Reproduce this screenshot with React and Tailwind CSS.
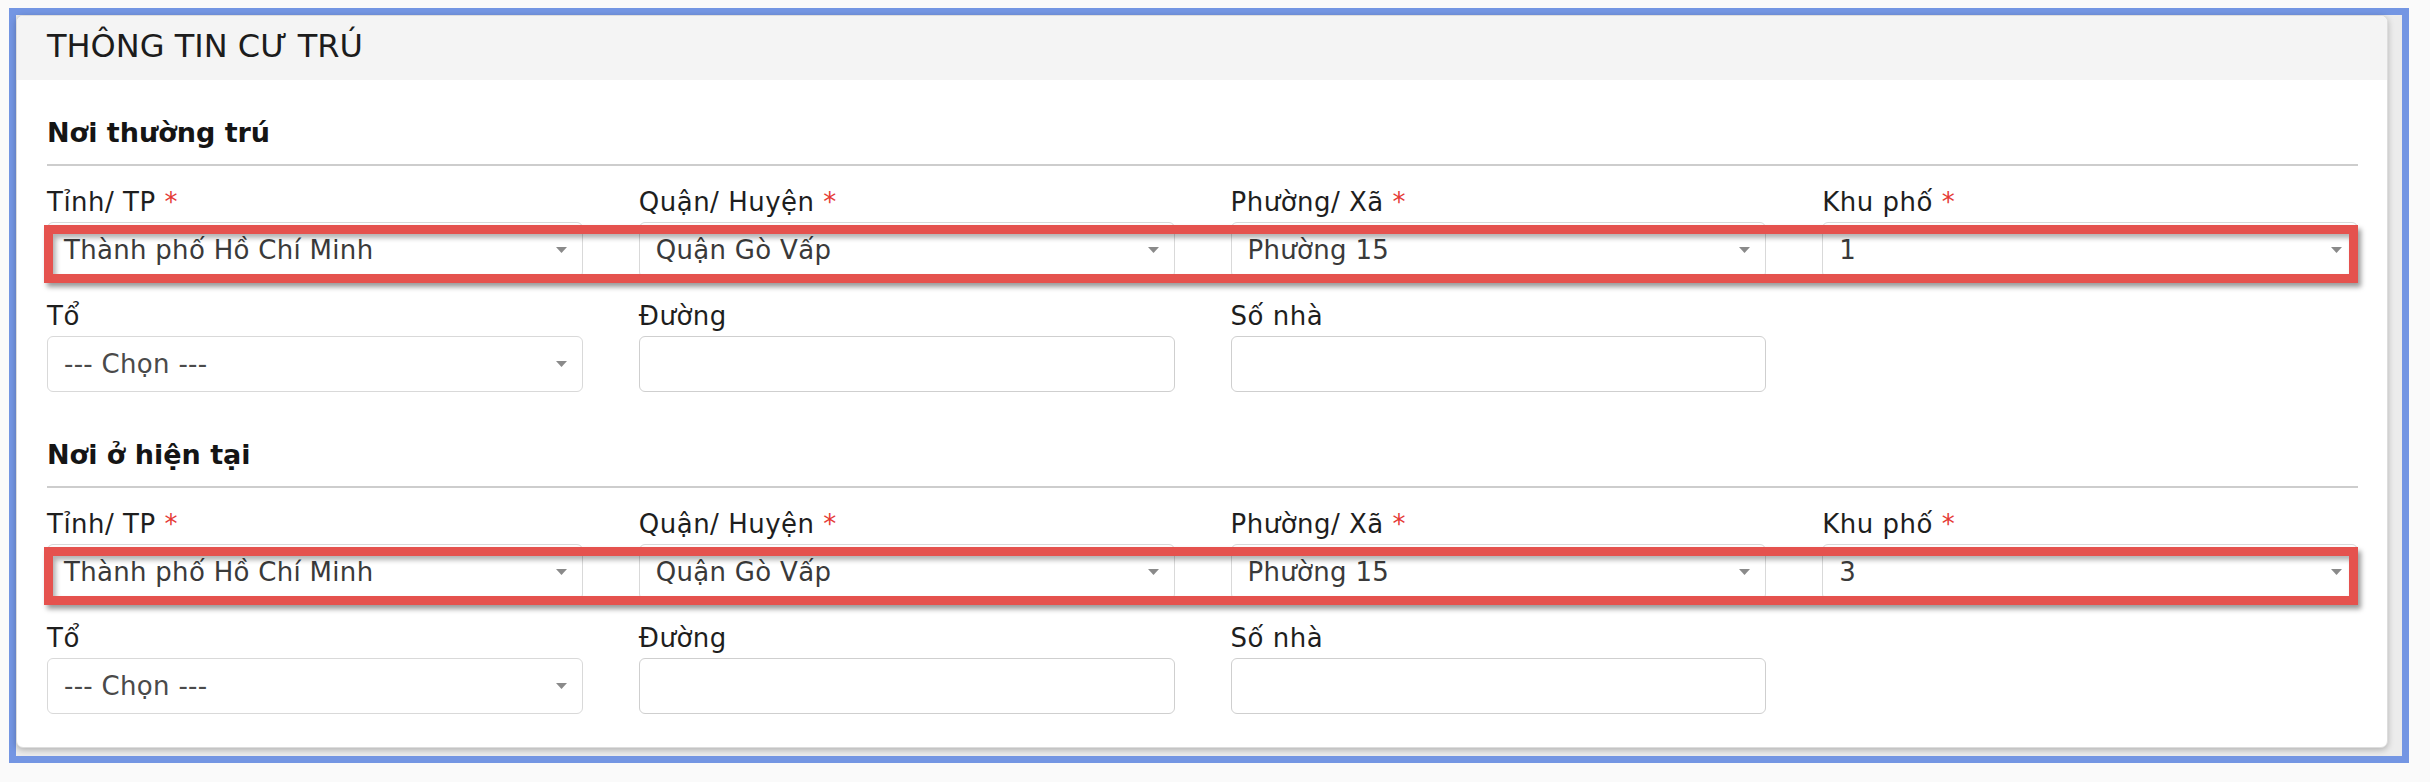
function Caret() {
  return (
    <svg width="11" height="6" viewBox="0 0 11 6" className="shrink-0">
      <path d="M0 0h11L5.5 6z" fill="#8a8a8a" />
    </svg>
  );
}

function Label({ text, required }) {
  return (
    <div className="h-[30px] whitespace-nowrap text-[26px] leading-[30px] tracking-[0.5px] text-[#1e1e1e]">
      {text}
      {required && <span className="text-[#e53935]"> *</span>}
    </div>
  );
}

function SelectBox({ value, muted }) {
  return (
    <div className="mt-[5px] flex h-[56px] items-center justify-between rounded-[6px] border border-[#d9d9d9] bg-white pl-[16px] pr-[15px]">
      <span
        className={
          muted
            ? 'text-[26px] leading-[30px] tracking-[0.3px] text-[#4a4a4a]'
            : 'text-[26px] leading-[30px] tracking-[0.3px] text-[#3a3a3a]'
        }
      >
        {value}
      </span>
      <Caret />
    </div>
  );
}

function InputBox() {
  return (
    <div className="mt-[5px] h-[56px] rounded-[6px] border border-[#cfcfcf] bg-white" />
  );
}

function Section({ title, tinh, quan, phuong, khuPho, first }) {
  return (
    <div className={first ? 'pt-[37px]' : 'pt-[47px]'}>
      <h3 className="text-[27px] font-bold leading-[32px] text-[#151515]">
        {title}
      </h3>
      <div className="mt-[15px] h-[2px] bg-[#cdcdcd]" />

      {/* Main address row, highlighted */}
      <div className="relative mt-[21px] grid grid-cols-4 gap-x-[56px]">
        <div>
          <Label text="Tỉnh/ TP" required />
          <SelectBox value={tinh} />
        </div>
        <div>
          <Label text="Quận/ Huyện" required />
          <SelectBox value={quan} />
        </div>
        <div>
          <Label text="Phường/ Xã" required />
          <SelectBox value={phuong} />
        </div>
        <div>
          <Label text="Khu phố" required />
          <SelectBox value={khuPho} />
        </div>
        <div className="pointer-events-none absolute bottom-[-5px] left-[-3px] right-0 h-[58px] border-[9px] border-[#e5524e] shadow-[3px_4px_5px_rgba(0,0,0,0.4),inset_3px_4px_5px_rgba(0,0,0,0.3)]" />
      </div>

      <div className="mt-[23px] grid grid-cols-4 gap-x-[56px]">
        <div>
          <Label text="Tổ" />
          <SelectBox value="--- Chọn ---" muted />
        </div>
        <div>
          <Label text="Đường" />
          <InputBox />
        </div>
        <div>
          <Label text="Số nhà" />
          <InputBox />
        </div>
        <div />
      </div>
    </div>
  );
}

export default function App() {
  return (
    <div className="h-[782px] w-[2430px] bg-[#fafafa] pl-[9px] pt-[8px] font-['DejaVu_Sans',sans-serif]">
      <div className="w-[2400px] border-[7px] border-[#7496e3] bg-[#ececec] pb-[8px] pr-[14px]">
        <div className="overflow-hidden rounded-[7px] border border-[#dddddd] bg-white shadow-[0_2px_6px_rgba(0,0,0,0.25)]">
          {/* Header */}
          <div className="h-[64px] bg-[#f4f4f4] pl-[30px] pt-[12px]">
            <h2 className="text-[32px] leading-[36px] text-[#1c1c1c]">
              THÔNG TIN CƯ TRÚ
            </h2>
          </div>

          <div className="pb-[33px] pl-[30px] pr-[29px]">
            <Section
              first
              title="Nơi thường trú"
              tinh="Thành phố Hồ Chí Minh"
              quan="Quận Gò Vấp"
              phuong="Phường 15"
              khuPho="1"
            />
            <Section
              title="Nơi ở hiện tại"
              tinh="Thành phố Hồ Chí Minh"
              quan="Quận Gò Vấp"
              phuong="Phường 15"
              khuPho="3"
            />
          </div>
        </div>
      </div>
    </div>
  );
}
